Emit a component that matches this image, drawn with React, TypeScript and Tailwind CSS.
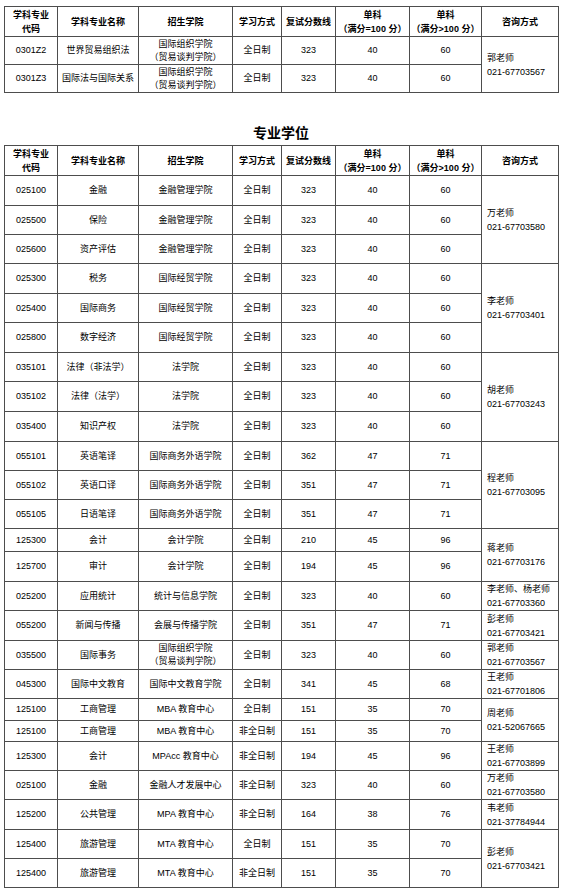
import * as React from "react";

type Contact = { name: string; phone: string; span: number };

type Row = {
  code: string;
  name: string;
  school: string[];
  mode: string;
  score: string;
  single: string;
  singleHigh: string;
  h: string;
  contact?: Contact;
};

const ACADEMIC: Row[] = [
  {
    code: "0301Z2",
    name: "世界贸易组织法",
    school: ["国际组织学院", "（贸易谈判学院）"],
    mode: "全日制",
    score: "323",
    single: "40",
    singleHigh: "60",
    h: "h-[28px]",
    contact: { name: "郭老师", phone: "021-67703567", span: 2 },
  },
  {
    code: "0301Z3",
    name: "国际法与国际关系",
    school: ["国际组织学院", "（贸易谈判学院）"],
    mode: "全日制",
    score: "323",
    single: "40",
    singleHigh: "60",
    h: "h-[28px]",
  },
];

const PROFESSIONAL: Row[] = [
  { code: "025100", name: "金融", school: ["金融管理学院"], mode: "全日制", score: "323", single: "40", singleHigh: "60", h: "h-[30px]", contact: { name: "万老师", phone: "021-67703580", span: 3 } },
  { code: "025500", name: "保险", school: ["金融管理学院"], mode: "全日制", score: "323", single: "40", singleHigh: "60", h: "h-[29px]" },
  { code: "025600", name: "资产评估", school: ["金融管理学院"], mode: "全日制", score: "323", single: "40", singleHigh: "60", h: "h-[29px]" },
  { code: "025300", name: "税务", school: ["国际经贸学院"], mode: "全日制", score: "323", single: "40", singleHigh: "60", h: "h-[30px]", contact: { name: "李老师", phone: "021-67703401", span: 3 } },
  { code: "025400", name: "国际商务", school: ["国际经贸学院"], mode: "全日制", score: "323", single: "40", singleHigh: "60", h: "h-[29px]" },
  { code: "025800", name: "数字经济", school: ["国际经贸学院"], mode: "全日制", score: "323", single: "40", singleHigh: "60", h: "h-[30px]" },
  { code: "035101", name: "法律（非法学）", school: ["法学院"], mode: "全日制", score: "323", single: "40", singleHigh: "60", h: "h-[29px]", contact: { name: "胡老师", phone: "021-67703243", span: 3 } },
  { code: "035102", name: "法律（法学）", school: ["法学院"], mode: "全日制", score: "323", single: "40", singleHigh: "60", h: "h-[30px]" },
  { code: "035400", name: "知识产权", school: ["法学院"], mode: "全日制", score: "323", single: "40", singleHigh: "60", h: "h-[30px]" },
  { code: "055101", name: "英语笔译", school: ["国际商务外语学院"], mode: "全日制", score: "362", single: "47", singleHigh: "71", h: "h-[29px]", contact: { name: "程老师", phone: "021-67703095", span: 3 } },
  { code: "055102", name: "英语口译", school: ["国际商务外语学院"], mode: "全日制", score: "351", single: "47", singleHigh: "71", h: "h-[29px]" },
  { code: "055105", name: "日语笔译", school: ["国际商务外语学院"], mode: "全日制", score: "351", single: "47", singleHigh: "71", h: "h-[29px]" },
  { code: "125300", name: "会计", school: ["会计学院"], mode: "全日制", score: "210", single: "45", singleHigh: "96", h: "h-[23px]", contact: { name: "蒋老师", phone: "021-67703176", span: 2 } },
  { code: "125700", name: "审计", school: ["会计学院"], mode: "全日制", score: "194", single: "45", singleHigh: "96", h: "h-[30px]" },
  { code: "025200", name: "应用统计", school: ["统计与信息学院"], mode: "全日制", score: "323", single: "40", singleHigh: "60", h: "h-[29px]", contact: { name: "李老师、杨老师", phone: "021-67703360", span: 1 } },
  { code: "055200", name: "新闻与传播", school: ["会展与传播学院"], mode: "全日制", score: "351", single: "47", singleHigh: "71", h: "h-[30px]", contact: { name: "彭老师", phone: "021-67703421", span: 1 } },
  { code: "035500", name: "国际事务", school: ["国际组织学院", "（贸易谈判学院）"], mode: "全日制", score: "323", single: "40", singleHigh: "60", h: "h-[29px]", contact: { name: "郭老师", phone: "021-67703567", span: 1 } },
  { code: "045300", name: "国际中文教育", school: ["国际中文教育学院"], mode: "全日制", score: "341", single: "45", singleHigh: "68", h: "h-[29px]", contact: { name: "王老师", phone: "021-67701806", span: 1 } },
  { code: "125100", name: "工商管理", school: ["MBA 教育中心"], mode: "全日制", score: "151", single: "35", singleHigh: "70", h: "h-[22px]", contact: { name: "周老师", phone: "021-52067665", span: 2 } },
  { code: "125100", name: "工商管理", school: ["MBA 教育中心"], mode: "非全日制", score: "151", single: "35", singleHigh: "70", h: "h-[21px]" },
  { code: "125300", name: "会计", school: ["MPAcc 教育中心"], mode: "非全日制", score: "194", single: "45", singleHigh: "96", h: "h-[28px]", contact: { name: "王老师", phone: "021-67703899", span: 1 } },
  { code: "025100", name: "金融", school: ["金融人才发展中心"], mode: "非全日制", score: "323", single: "40", singleHigh: "60", h: "h-[29px]", contact: { name: "万老师", phone: "021-67703580", span: 1 } },
  { code: "125200", name: "公共管理", school: ["MPA 教育中心"], mode: "非全日制", score: "164", single: "38", singleHigh: "76", h: "h-[30px]", contact: { name: "韦老师", phone: "021-37784944", span: 1 } },
  { code: "125400", name: "旅游管理", school: ["MTA 教育中心"], mode: "全日制", score: "151", single: "35", singleHigh: "70", h: "h-[29px]", contact: { name: "彭老师", phone: "021-67703421", span: 2 } },
  { code: "125400", name: "旅游管理", school: ["MTA 教育中心"], mode: "非全日制", score: "151", single: "35", singleHigh: "70", h: "h-[29px]" },
];

const cell = "border border-[#4d4d4d] p-0 text-center align-middle";

function Cols() {
  return (
    <colgroup>
      <col className="w-[53px]" />
      <col className="w-[81px]" />
      <col className="w-[94px]" />
      <col className="w-[49px]" />
      <col className="w-[54px]" />
      <col className="w-[74px]" />
      <col className="w-[72px]" />
      <col className="w-[77px]" />
    </colgroup>
  );
}

function HeaderRow() {
  return (
    <tr className="h-[30px] font-bold leading-[14px]">
      <th className={cell}>
        学科专业
        <br />
        代码
      </th>
      <th className={cell}>学科专业名称</th>
      <th className={cell}>招生学院</th>
      <th className={cell}>学习方式</th>
      <th className={cell}>复试分数线</th>
      <th className={cell}>
        单科
        <br />
        （满分=100 分）
      </th>
      <th className={cell}>
        单科
        <br />
        （满分&gt;100 分）
      </th>
      <th className={cell}>咨询方式</th>
    </tr>
  );
}

function DataRow({ row }: { row: Row }) {
  return (
    <tr className={`${row.h} leading-[13px]`}>
      <td className={cell}>{row.code}</td>
      <td className={cell}>{row.name}</td>
      <td className={cell}>
        {row.school.map((line, i) => (
          <div key={i}>{line}</div>
        ))}
      </td>
      <td className={cell}>{row.mode}</td>
      <td className={cell}>{row.score}</td>
      <td className={cell}>{row.single}</td>
      <td className={cell}>{row.singleHigh}</td>
      {row.contact && (
        <td rowSpan={row.contact.span} className={`${cell} pl-[5px] text-left leading-[14px]`}>
          <div>{row.contact.name}</div>
          <div>{row.contact.phone}</div>
        </td>
      )}
    </tr>
  );
}

function ScoreTable({ rows }: { rows: Row[] }) {
  return (
    <table className="w-[554px] table-fixed border-collapse">
      <Cols />
      <tbody>
        <HeaderRow />
        {rows.map((row, i) => (
          <DataRow key={i} row={row} />
        ))}
      </tbody>
    </table>
  );
}

export default function App() {
  return (
    <div
      className="min-h-[893px] w-[566px] bg-white pl-[4px] pt-[6px] text-[9px] text-black"
      style={{ fontFamily: '"Liberation Sans", "Noto Sans CJK SC", sans-serif' }}
    >
      <ScoreTable rows={ACADEMIC} />
      <h2 className="w-[554px] pb-[2px] pt-[31px] text-center text-[14px] font-bold leading-[19px]">
        专业学位
      </h2>
      <ScoreTable rows={PROFESSIONAL} />
    </div>
  );
}
